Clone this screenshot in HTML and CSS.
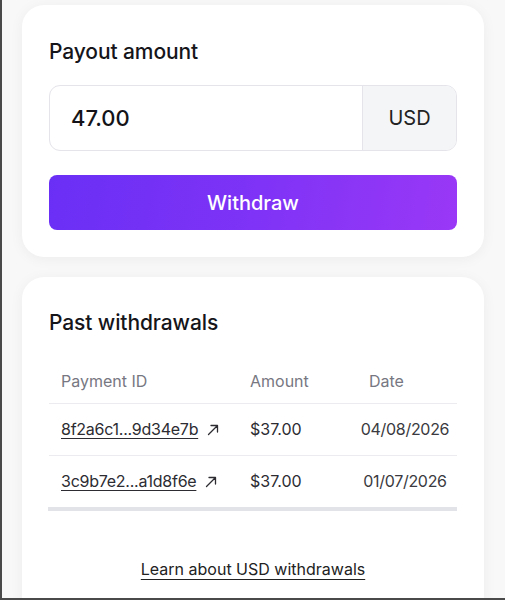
FILE: index.html
```
<!DOCTYPE html>
<html>
<head>
<meta charset="utf-8">
<link rel="stylesheet" href="styles.css">
</head>
<body>
<div class="frame">
  <section class="card payout">
    <h2 class="title">Payout amount</h2>
    <div class="amount-field">
      <div class="amount-value">47.00</div>
      <div class="amount-currency">USD</div>
    </div>
    <button class="withdraw-btn">Withdraw</button>
  </section>
  <section class="card history">
    <h2 class="title">Past withdrawals</h2>
    <div class="table-wrap">
      <table class="wtable">
        <colgroup>
          <col class="c-id">
          <col class="c-amt">
          <col class="c-date">
        </colgroup>
        <thead>
          <tr>
            <th>Payment ID</th>
            <th>Amount</th>
            <th>Date</th>
          </tr>
        </thead>
        <tbody>
          <tr>
            <td><a class="pid">8f2a6c1...9d34e7b</a><svg class="arrow" viewBox="0 0 12 12" width="12" height="12"><path d="M1.5 10.5 L10.5 1.5 M4 1.5 H10.5 V8" fill="none" stroke="#2c2c32" stroke-width="1.3" stroke-linecap="round" stroke-linejoin="round"/></svg></td>
            <td>$37.00</td>
            <td class="date">04/08/2026</td>
          </tr>
          <tr>
            <td><a class="pid">3c9b7e2...a1d8f6e</a><svg class="arrow" viewBox="0 0 12 12" width="12" height="12"><path d="M1.5 10.5 L10.5 1.5 M4 1.5 H10.5 V8" fill="none" stroke="#2c2c32" stroke-width="1.3" stroke-linecap="round" stroke-linejoin="round"/></svg></td>
            <td>$37.00</td>
            <td class="date">01/07/2026</td>
          </tr>
        </tbody>
      </table>
      <div class="scrollbar"></div>
    </div>
    <div class="learn"><a class="learn-link">Learn about USD withdrawals</a></div>
  </section>
</div>
</body>
</html>
```
FILE: styles.css
```
* { box-sizing: border-box; }
html, body { margin: 0; padding: 0; }
body {
  font-family: Inter, "Noto Sans", sans-serif;
  background: #f8f8f9;
  color: #1c1c22;
}
.frame {
  height: 600px;
  overflow: hidden;
  border-left: 2px solid #4a4a4a;
  border-bottom: 2px solid #4a4a4a;
  padding: 5px 0 0 20px;
  width: 505px;
  display: flex;
  flex-direction: column;
  gap: 20px;
}
.card {
  width: 462px;
  background: #fff;
  border-radius: 22px;
  box-shadow: 0 2px 14px rgba(0,0,0,0.05);
  padding: 0 27px;
  flex-shrink: 0;
}
.payout { padding-top: 33px; padding-bottom: 27px; }
.title {
  margin: 0;
  font-size: 21px;
  line-height: 28px;
  font-weight: 500;
  letter-spacing: -0.1px;
  color: #15151a;
}
.amount-field {
  margin-top: 19px;
  height: 66px;
  border: 1px solid #e4e4ea;
  border-radius: 11px;
  display: flex;
  overflow: hidden;
}
.amount-value {
  flex: 1;
  display: flex;
  align-items: center;
  padding-left: 21px;
  font-size: 22px;
  font-weight: 500;
  color: #141418;
}
.amount-currency {
  width: 94px;
  background: #f4f5f7;
  border-left: 1px solid #e4e4ea;
  display: flex;
  align-items: center;
  justify-content: center;
  font-size: 20px;
  color: #222;
}
.withdraw-btn {
  margin-top: 24px;
  width: 100%;
  height: 55px;
  border: 0;
  border-radius: 8px;
  background: linear-gradient(100deg, #6a2ff5 0%, #7e33f6 50%, #9a38f6 100%);
  color: #fff;
  font-family: inherit;
  font-size: 20px;
  font-weight: 500;
  display: block;
}
.history { padding-top: 32px; padding-bottom: 40px; }
.table-wrap { margin-top: 22px; }
.wtable {
  width: 100%;
  table-layout: fixed;
  border-collapse: collapse;
  font-size: 16px;
}
.c-id { width: 189px; }
.c-amt { width: 119px; }
.wtable th {
  text-align: left;
  font-weight: 400;
  color: #777782;
  height: 44px;
  padding: 0 12px;
  border-bottom: 1px solid #ececf0;
  white-space: nowrap;
}
.wtable td {
  height: 52px;
  padding: 0 12px;
  color: #2c2c32;
  border-bottom: 1px solid #ececf0;
  white-space: nowrap;
}
.wtable tbody tr:last-child td { border-bottom: 0; }
.wtable td.date {
  text-align: center;
  padding: 0 4px 0 0;
  letter-spacing: -0.3px;
  color: #3a3a40;
}
.pid {
  color: #2c2c32;
  text-decoration: underline;
  text-underline-offset: 3px;
  text-decoration-thickness: 1px;
  letter-spacing: -0.25px;
}
.arrow { margin-left: 9px; vertical-align: -1px; }
.scrollbar {
  height: 4px;
  background: #e2e3e9;
  margin: 0 0 0 -1px;
}
.learn {
  margin-top: 48px;
  text-align: center;
  font-size: 16px;
}
.learn-link {
  color: #222;
  text-decoration: underline;
  text-underline-offset: 4px;
}
```
